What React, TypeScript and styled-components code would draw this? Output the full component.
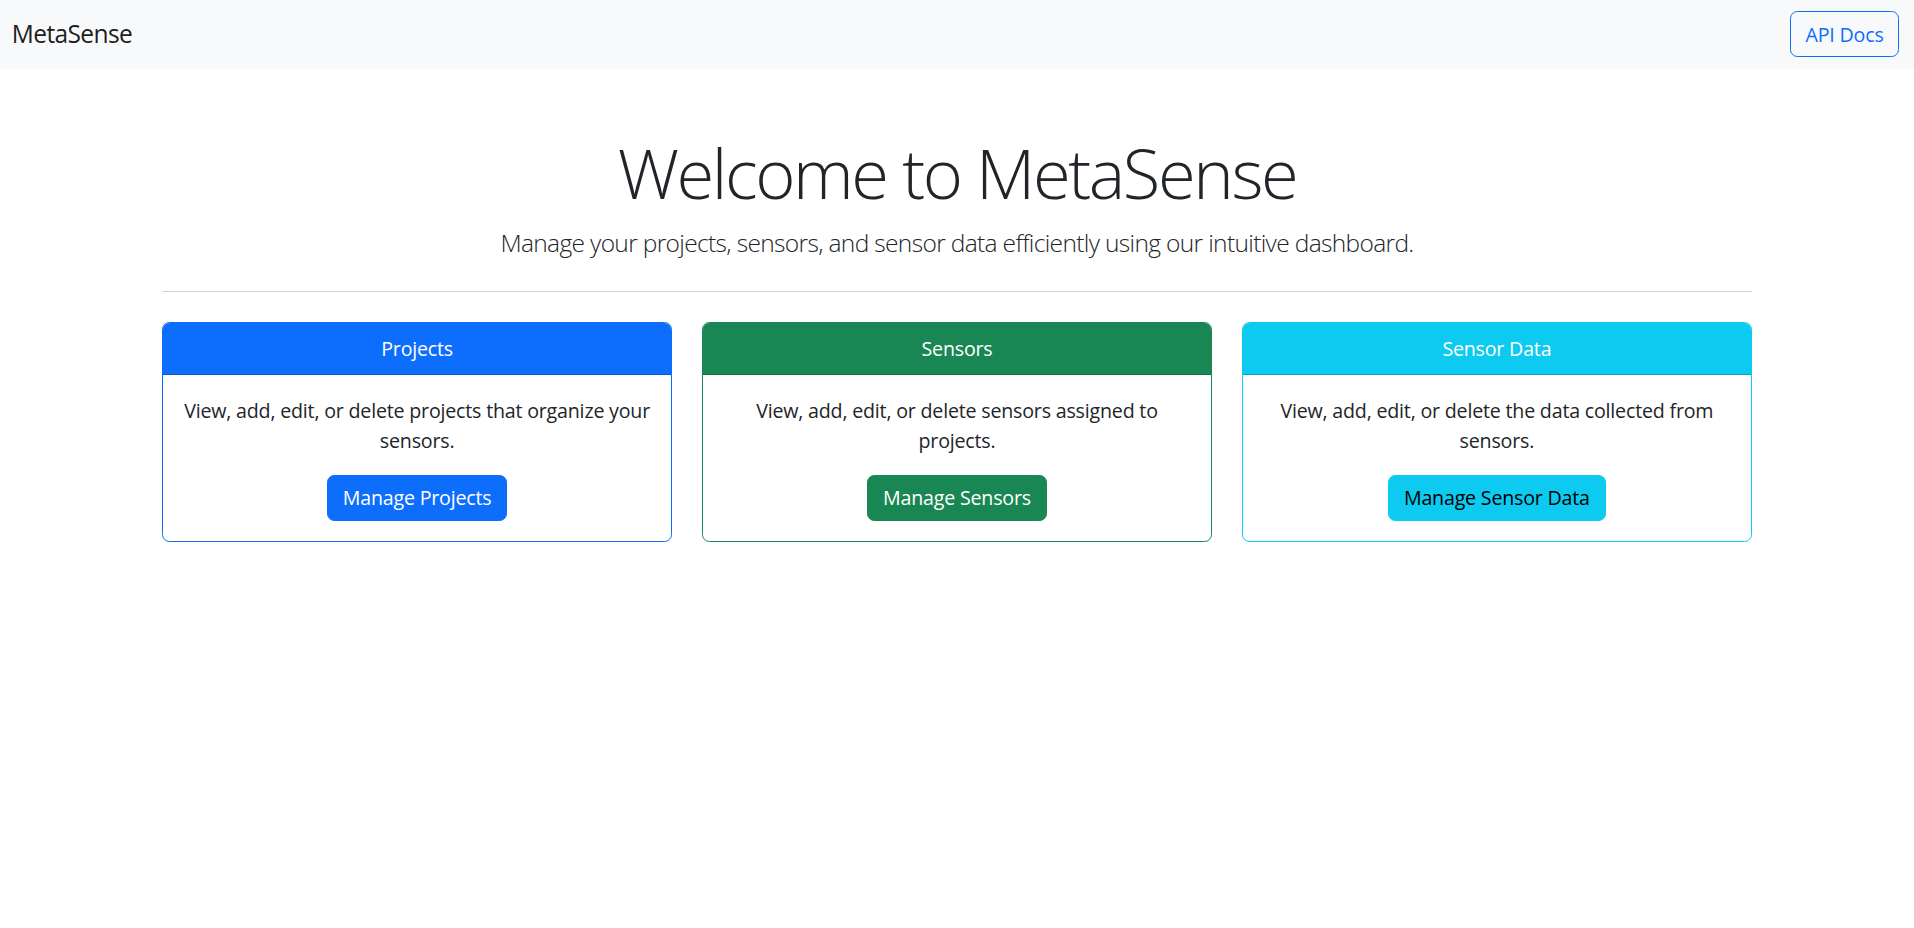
import React from "react";
import styled, { createGlobalStyle } from "styled-components";

const Global = createGlobalStyle`
  html { font-size: 19.632px; }
  body {
    margin: 0;
    font-family: "Open Sans", "Noto Sans", sans-serif;
    font-size: 1rem;
    line-height: 1.5;
    letter-spacing: -0.01em;
    color: #212529;
    background: #fff;
  }
  * { box-sizing: border-box; }
`;

const Navbar = styled.nav`
  background: #f8f9fa;
  padding: 0.5rem 0;
`;

const NavInner = styled.div`
  display: flex;
  align-items: center;
  justify-content: space-between;
  padding: 0 0.75rem 0 0.6rem;
`;

const Brand = styled.a`
  font-size: 1.25rem;
  padding: 0.3125rem 0;
  letter-spacing: -0.025em;
  color: rgba(0, 0, 0, 0.9);
  text-decoration: none;
`;

const OutlineButton = styled.a`
  display: inline-block;
  padding: 0.375rem 0.75rem;
  font-size: 1rem;
  line-height: 1.5;
  border: 1px solid #0d6efd;
  border-radius: 0.375rem;
  color: #0d6efd;
  text-decoration: none;
`;

const Container = styled.main`
  max-width: 82.5rem;
  width: 100%;
  margin: 3.25rem auto 0;
  padding: 0 0.75rem;
`;

const Hero = styled.header`
  text-align: center;
`;

const Title = styled.h1`
  margin: 0 0 0.5rem;
  font-size: 3.5rem;
  font-weight: 300;
  line-height: 1.2;
  letter-spacing: -0.035em;
`;

const Lead = styled.p`
  margin: 0;
  font-size: 1.25rem;
  font-weight: 300;
  letter-spacing: -0.027em;
`;

const Rule = styled.hr`
  margin: 1.5rem 0 1.55rem;
  border: 0;
  border-top: 1px solid #d3d3d4;
`;

const Grid = styled.div`
  display: grid;
  grid-template-columns: repeat(3, 1fr);
  gap: 1.5rem;
`;

const Card = styled.section<{ $c: string }>`
  border: 1px solid ${(p) => p.$c};
  border-radius: 0.375rem;
  overflow: hidden;
  text-align: center;
  display: flex;
  flex-direction: column;
`;

const CardHeader = styled.div<{ $c: string }>`
  background: ${(p) => p.$c};
  color: #fff;
  padding: 0.53rem 1rem;
  border-bottom: 1px solid rgba(0, 0, 0, 0.175);
`;

const CardBody = styled.div`
  padding: 1.1rem 1rem 1rem;
`;

const CardText = styled.p`
  margin: 0 0 1rem;
`;

const SolidButton = styled.a<{ $c: string; $dark?: boolean }>`
  display: inline-block;
  padding: 0.39rem 0.75rem;
  font-size: 1rem;
  line-height: 1.5;
  border: 1px solid ${(p) => p.$c};
  border-radius: 0.375rem;
  background: ${(p) => p.$c};
  color: ${(p) => (p.$dark ? "#000" : "#fff")};
  text-decoration: none;
`;

const cards = [
  {
    title: "Projects",
    text: "View, add, edit, or delete projects that organize your sensors.",
    btn: "Manage Projects",
    color: "#0d6efd",
    dark: false,
  },
  {
    title: "Sensors",
    text: "View, add, edit, or delete sensors assigned to projects.",
    btn: "Manage Sensors",
    color: "#198754",
    dark: false,
  },
  {
    title: "Sensor Data",
    text: "View, add, edit, or delete the data collected from sensors.",
    btn: "Manage Sensor Data",
    color: "#0dcaf0",
    dark: true,
  },
];

export default function App() {
  return (
    <>
      <Global />
      <Navbar>
        <NavInner>
          <Brand href="#">MetaSense</Brand>
          <OutlineButton href="#">API Docs</OutlineButton>
        </NavInner>
      </Navbar>
      <Container>
        <Hero>
          <Title>Welcome to MetaSense</Title>
          <Lead>Manage your projects, sensors, and sensor data efficiently using our intuitive dashboard.</Lead>
        </Hero>
        <Rule />
        <Grid>
          {cards.map((c) => (
            <Card key={c.title} $c={c.color}>
              <CardHeader $c={c.color}>{c.title}</CardHeader>
              <CardBody>
                <CardText>{c.text}</CardText>
                <SolidButton href="#" $c={c.color} $dark={c.dark}>
                  {c.btn}
                </SolidButton>
              </CardBody>
            </Card>
          ))}
        </Grid>
      </Container>
    </>
  );
}
